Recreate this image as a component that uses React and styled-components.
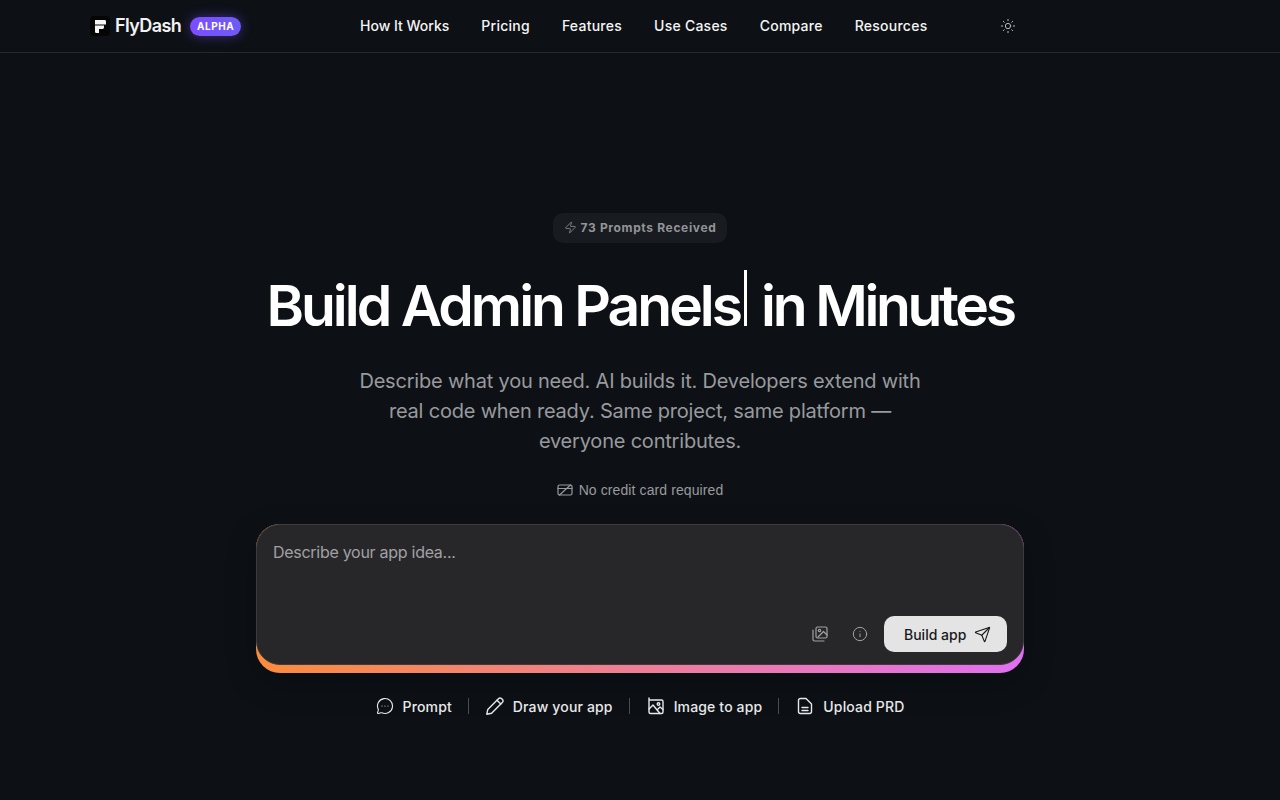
import styled, { createGlobalStyle } from "styled-components";
import { Sun, Zap, Info, Send, MessageCircleMore } from "lucide-react";

const GlobalStyle = createGlobalStyle`
  html, body {
    margin: 0;
    background: #0d1116;
    color: #fff;
    font-family: "Inter", "Liberation Sans", sans-serif;
  }
  * { box-sizing: border-box; }
`;

const Page = styled.div`
  height: 800px;
  overflow: hidden;
  background: #0d1116;
`;

const Header = styled.header`
  height: 53px;
  border-bottom: 1px solid #25282d;
  display: flex;
  align-items: center;
  padding-left: 90px;
`;

const Brand = styled.div`
  width: 270px;
  display: flex;
  align-items: center;
`;

const LogoName = styled.span`
  margin: 0 0 2px 5px;
  font-size: 18px;
  font-weight: 600;
  letter-spacing: -0.6px;
  color: #f2f2f2;
`;

const AlphaBadge = styled.span`
  margin-left: 9px;
  height: 19px;
  width: 51px;
  display: flex;
  align-items: center;
  justify-content: center;
  border-radius: 10px;
  background: linear-gradient(90deg, #7c4dff, #6d5cf6);
  box-shadow: 0 0 12px rgba(124, 77, 255, 0.45);
  font-size: 10px;
  font-weight: 700;
  letter-spacing: 0.5px;
  color: #fff;
`;

const Nav = styled.nav`
  display: flex;
  gap: 32px;
`;

const NavLink = styled.a`
  margin-bottom: 2px;
  font-size: 14px;
  font-weight: 500;
  letter-spacing: ${(p) => p.$tracking || "0.25px"};
  color: #f5f5f5;
`;

const ThemeButton = styled.button`
  margin-left: 65px;
  width: 32px;
  height: 32px;
  padding: 0;
  border: 0;
  background: none;
  color: #b5b5b5;
  display: flex;
  align-items: center;
  justify-content: center;
`;

const Hero = styled.main`
  padding-top: 160px;
  display: flex;
  flex-direction: column;
  align-items: center;
`;

const CountBadge = styled.div`
  height: 30px;
  padding: 0 11px 2px;
  display: flex;
  align-items: center;
  gap: 4px;
  border-radius: 10px;
  background: #181b20;
  color: #939497;
  font-size: 12px;
  font-weight: 700;
  letter-spacing: 0.65px;
`;

const Title = styled.h1`
  margin: 27px 0 0;
  height: 56px;
  display: flex;
  align-items: flex-start;
  font-size: 57px;
  line-height: 72px;
  font-weight: 600;
  color: #fff;
  white-space: nowrap;
`;

const TitleText = styled.span`
  letter-spacing: ${(p) => p.$tracking};
`;

const Caret = styled.span`
  width: 3px;
  height: 56px;
  margin: 0 14px 0 4px;
  background: #fff;
`;

const Subtitle = styled.p`
  margin: 40px 0 0;
  width: 600px;
  text-align: center;
  font-size: 20px;
  line-height: 30px;
  letter-spacing: -0.2px;
  color: #999a9d;
`;

const NoCard = styled.div`
  margin-top: 24px;
  height: 20px;
  display: flex;
  align-items: center;
  gap: 6px;
  font-family: "Liberation Sans", sans-serif;
  font-size: 14px;
  letter-spacing: 0.1px;
  color: #999a9d;
`;

const PromptCard = styled.div`
  margin-top: 24px;
  width: 768px;
  height: 149px;
  padding-bottom: 8px;
  border-radius: 24px;
  background: linear-gradient(90deg, #fb8c3c, #e070f0);
  box-shadow: 0 10px 30px rgba(0, 0, 0, 0.3);
`;

const PromptInner = styled.div`
  height: 141px;
  border: 1px solid #3c3c3e;
  border-radius: 24px;
  background: #27272a;
  padding: 15px 16px 12px;
  display: flex;
  flex-direction: column;
  justify-content: space-between;
`;

const Placeholder = styled.div`
  font-size: 16px;
  line-height: 24px;
  letter-spacing: -0.28px;
  color: #a1a1a5;
`;

const PromptActions = styled.div`
  display: flex;
  justify-content: flex-end;
  align-items: center;
`;

const IconButton = styled.button`
  width: 40px;
  height: 36px;
  padding: 0;
  border: 0;
  background: none;
  color: #a1a1a5;
  display: flex;
  align-items: center;
  justify-content: center;
`;

const BuildButton = styled.button`
  margin-left: 4px;
  width: 123px;
  height: 36px;
  padding: 0 0 0 20px;
  border: 0;
  border-radius: 10px;
  background: #e4e4e5;
  color: #18181b;
  display: flex;
  align-items: center;
  gap: 8px;
  font-family: inherit;
  font-size: 14px;
  font-weight: 500;
`;

const Tabs = styled.div`
  margin-top: 24px;
  display: flex;
  align-items: center;
`;

const Tab = styled.div`
  display: flex;
  align-items: center;
  gap: 9px;
  font-size: 14px;
  font-weight: 500;
  letter-spacing: 0.15px;
  color: #e8e8e9;
`;

const Divider = styled.span`
  width: 1px;
  height: 16px;
  margin: 0 17px 0 16px;
  background: #4a4c50;
`;

const LogoMark = () => (
  <svg width="20" height="20" viewBox="0 0 20 20">
    <rect width="20" height="20" rx="4" fill="#050505" />
    <path d="M5 4h9.6a1.4 1.4 0 0 1 1.4 1.4v3.1H5zM5 9.5h9v2.1a1.4 1.4 0 0 1-1.4 1.4H9v4H6.2A1.2 1.2 0 0 1 5 15.8z" fill="#f5f5f5" />
  </svg>
);

const CardOffIcon = () => (
  <svg width="16" height="16" viewBox="0 0 16 16" fill="none" stroke="currentColor" strokeWidth="1.2" strokeLinecap="round">
    <rect x="1" y="3" width="14" height="10" rx="1.5" />
    <path d="M1 6.5h14M2.5 13 13.5 3" />
  </svg>
);

const GalleryIcon = () => (
  <svg width="16" height="16" viewBox="0 0 16 16" fill="none" stroke="currentColor" strokeWidth="1.2" strokeLinecap="round" strokeLinejoin="round">
    <rect x="4" y="1" width="11" height="11" rx="1.5" />
    <path d="M1 4v9.500A1.500 1.500 0 0 0 2.500 15H12" />
    <circle cx="7.500" cy="4.500" r="1.200" />
    <path d="m6 11 5.500-5.500L15 9" />
  </svg>
);

const PenIcon = () => (
  <svg width="18" height="18" viewBox="0 0 18 18" fill="none" stroke="currentColor" strokeWidth="1.4" strokeLinecap="round" strokeLinejoin="round">
    <path d="M0.800 17.200 1.800 12.400 12.700 1.500a1.900 1.900 0 0 1 2.700 0l1.100 1.100a1.900 1.900 0 0 1 0 2.700L5.600 16.200z" />
    <path d="m11 3.200 3.800 3.800" />
  </svg>
);

const PhotoIcon = () => (
  <svg width="18" height="18" viewBox="0 0 18 18" fill="none" stroke="currentColor" strokeWidth="1.4" strokeLinecap="round" strokeLinejoin="round">
    <path d="M2 1v14a1.500 1.500 0 0 0 1.500 1.500h11A1.500 1.500 0 0 0 16 15V4.500A1.500 1.500 0 0 0 14.500 3H2" />
    <circle cx="11.500" cy="7" r="1.300" />
    <path d="m2 12 4-4 7 8.500M11 12l2-2 3 2.500" />
  </svg>
);

const DocIcon = () => (
  <svg width="18" height="18" viewBox="0 0 18 18" fill="none" stroke="currentColor" strokeWidth="1.4" strokeLinecap="round" strokeLinejoin="round">
    <path d="M4.500 1.500h5.500L15.500 7v7.500a2 2 0 0 1-2 2h-9a2 2 0 0 1-2-2v-11a2 2 0 0 1 2-2z" />
    <path d="M6 10.500h6M6 13.500h6" />
  </svg>
);

const App = () => {
  return (
    <Page>
      <GlobalStyle />
      <Header>
        <Brand>
          <LogoMark />
          <LogoName>FlyDash</LogoName>
          <AlphaBadge>ALPHA</AlphaBadge>
        </Brand>
        <Nav>
          <NavLink $tracking="0">How It Works</NavLink>
          <NavLink>Pricing</NavLink>
          <NavLink>Features</NavLink>
          <NavLink>Use Cases</NavLink>
          <NavLink>Compare</NavLink>
          <NavLink>Resources</NavLink>
        </Nav>
        <ThemeButton>
          <Sun size={16} strokeWidth={1.5} />
        </ThemeButton>
      </Header>
      <Hero>
        <CountBadge>
          <Zap size={13} strokeWidth={1.5} />
          73 Prompts Received
        </CountBadge>
        <Title>
          <TitleText $tracking="-3px">Build Admin Panels</TitleText>
          <Caret />
          <TitleText $tracking="-3.35px">in Minutes</TitleText>
        </Title>
        <Subtitle>
          Describe what you need. AI builds it. Developers extend with
          <br />
          real code when ready. Same project, same platform —
          <br />
          everyone contributes.
        </Subtitle>
        <NoCard>
          <CardOffIcon />
          No credit card required
        </NoCard>
        <PromptCard>
          <PromptInner>
            <Placeholder>Describe your app idea...</Placeholder>
            <PromptActions>
              <IconButton>
                <GalleryIcon />
              </IconButton>
              <IconButton>
                <Info size={16} strokeWidth={1.5} />
              </IconButton>
              <BuildButton>
                Build app
                <Send size={17} strokeWidth={1.6} />
              </BuildButton>
            </PromptActions>
          </PromptInner>
        </PromptCard>
        <Tabs>
          <Tab>
            <MessageCircleMore size={18} strokeWidth={1.5} />
            Prompt
          </Tab>
          <Divider />
          <Tab>
            <PenIcon />
            Draw your app
          </Tab>
          <Divider />
          <Tab>
            <PhotoIcon />
            Image to app
          </Tab>
          <Divider />
          <Tab>
            <DocIcon />
            Upload PRD
          </Tab>
        </Tabs>
      </Hero>
    </Page>
  );
};

export default App;
